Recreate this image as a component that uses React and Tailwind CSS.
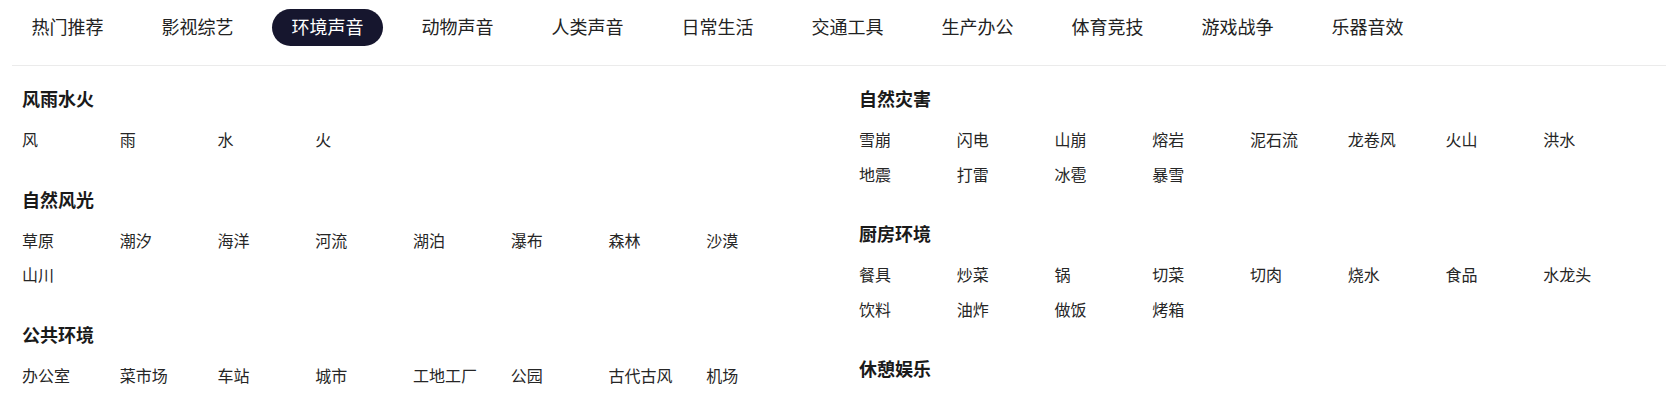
import React from "react";

const tabs = ["热门推荐", "影视综艺", "环境声音", "动物声音", "人类声音", "日常生活", "交通工具", "生产办公", "体育竞技", "游戏战争", "乐器音效"];

const left = [
  { title: "风雨水火", items: ["风", "雨", "水", "火"] },
  { title: "自然风光", items: ["草原", "潮汐", "海洋", "河流", "湖泊", "瀑布", "森林", "沙漠", "山川"] },
  { title: "公共环境", items: ["办公室", "菜市场", "车站", "城市", "工地工厂", "公园", "古代古风", "机场"] },
];

const right = [
  { title: "自然灾害", items: ["雪崩", "闪电", "山崩", "熔岩", "泥石流", "龙卷风", "火山", "洪水", "地震", "打雷", "冰雹", "暴雪"] },
  { title: "厨房环境", items: ["餐具", "炒菜", "锅", "切菜", "切肉", "烧水", "食品", "水龙头", "饮料", "油炸", "做饭", "烤箱"] },
  { title: "休憩娱乐", items: [] },
];

function Section({ s }) {
  return (
    <div className="flex flex-col">
      <h3 className="text-[18px] leading-[24px] font-bold text-[#1a1a1a]">{s.title}</h3>
      {s.items.length > 0 && (
        <div className="mt-[12px] grid grid-cols-[repeat(8,97.75px)]">
          {s.items.map((it) => (
            <span key={it} className="text-[16px] leading-[34.5px] text-[#262626] whitespace-nowrap cursor-pointer">
              {it}
            </span>
          ))}
        </div>
      )}
    </div>
  );
}

export default function App() {
  return (
    <div className="bg-white w-[1666px] min-h-[400px] font-['PingFang_SC','Noto_Sans_CJK_SC',sans-serif]">
      <div className="ml-[12px] border-b border-[#ebebeb] pt-[9px] pb-[19px]">
        <nav className="flex gap-[19px]">
          {tabs.map((t) => (
            <button
              key={t}
              className={
                t === "环境声音"
                  ? "h-[37px] px-[19.5px] rounded-full bg-[#16162e] text-white text-[18px] leading-[35px] pb-[2px] whitespace-nowrap"
                  : "h-[37px] px-[19.5px] rounded-full text-[#222222] text-[18px] leading-[35px] pb-[2px] whitespace-nowrap"
              }
            >
              {t}
            </button>
          ))}
        </nav>
      </div>
      <div className="flex pl-[22px] pt-[20px]">
        <div className="w-[837px] flex flex-col gap-[30px]">
          {left.map((s) => (
            <Section key={s.title} s={s} />
          ))}
        </div>
        <div className="flex-1 flex flex-col gap-[30px]">
          {right.map((s) => (
            <Section key={s.title} s={s} />
          ))}
        </div>
      </div>
    </div>
  );
}
